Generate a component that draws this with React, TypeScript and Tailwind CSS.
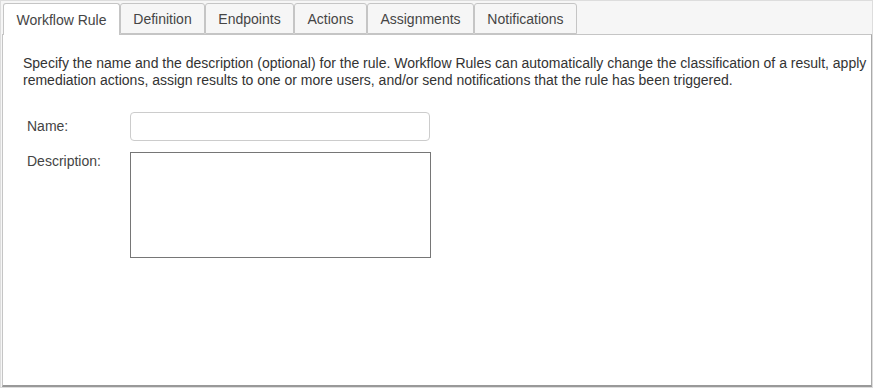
import React from "react";

const tabs = [
  { label: "Workflow Rule", w: 117 },
  { label: "Definition", w: 85 },
  { label: "Endpoints", w: 89 },
  { label: "Actions", w: 73 },
  { label: "Assignments", w: 107 },
  { label: "Notifications", w: 103 },
];

export default function App() {
  return (
    <div
      className="w-[873px] h-[388px] bg-[#f6f6f6] border border-[#dddddd] flex flex-col pt-[2px] pl-[1px] text-[14px]"
      style={{ fontFamily: '"Liberation Sans", Arial, sans-serif' }}
    >
      <div className="flex pl-[1px] relative z-10">
        {tabs.map((t, i) => {
          const active = i === 0;
          return (
            <div
              key={t.label}
              style={{ width: t.w }}
              className={
                active
                  ? "h-[32px] bg-white border border-[#c5c5c5] border-b-0 rounded-t-[3px] flex items-center justify-center text-[#454545] -mb-px pt-[2px] pb-px"
                  : "h-[31px] bg-[#f6f6f6] border border-[#c5c5c5] rounded-t-[3px] flex items-center justify-center text-[#454545] pt-[2px]"
              }
            >
              {t.label}
            </div>
          );
        })}
      </div>
      <div className="flex-1 bg-white border border-[#c5c5c5] border-r-[#aaaaaa] border-b-[#999999] border-b-2 pl-[20px] pt-[20px]">
        <p className="text-[#333333] leading-[17px] w-[850px]">
          Specify the name and the description (optional) for the rule. Workflow Rules can automatically change the classification of a result, apply remediation actions, assign results to one or more users, and/or send notifications that the rule has been triggered.
        </p>
        <div className="mt-[23px] flex items-center">
          <div className="w-[107px] pl-[4px] text-[#444444]">Name:</div>
          <div className="w-[300px] h-[29px] border border-[#cccccc] rounded-[4px]"></div>
        </div>
        <div className="mt-[11px] flex items-start">
          <div className="w-[107px] pl-[4px] text-[#444444] pt-px leading-[16px]">Description:</div>
          <div className="w-[301px] h-[106px] border border-[#767676]"></div>
        </div>
      </div>
    </div>
  );
}
